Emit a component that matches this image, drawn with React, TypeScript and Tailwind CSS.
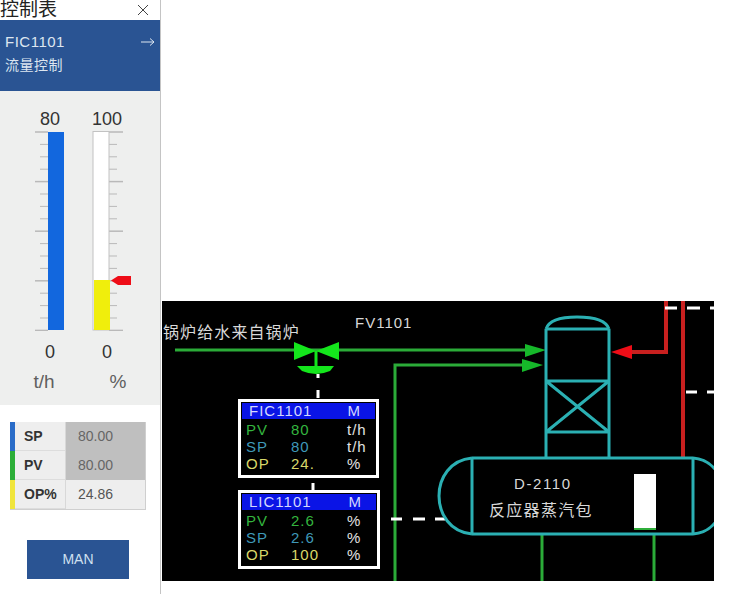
import React from 'react';

const FONT = 'font-["Liberation_Sans","Noto_Sans_CJK_SC",sans-serif]';

const ticks = Array.from({ length: 17 }, (_, i) => ({ y: 132 + i * 12.4, major: i % 4 === 0 }));

// level gauges share one drawing, coordinates follow the panel
const Gauges = () => (
  <svg viewBox="0 131 160 200" className="block w-[160px] h-[200px]">
    {ticks.map((t) => (
      <g key={t.y} stroke="#b9b9b9" strokeWidth={t.major ? 1.5 : 1}>
        <line x1={t.major ? 35 : 40} x2="48" y1={t.y} y2={t.y} />
        <line x1="109" x2={t.major ? 123 : 117} y1={t.y} y2={t.y} />
      </g>
    ))}
    <rect x="48" y="132" width="16" height="198" fill="#1267de" />
    <rect x="93" y="131.5" width="16" height="198.5" fill="#ffffff" stroke="#c2c2c2" />
    <rect x="94" y="280" width="16" height="50" fill="#f0ee0c" />
    <path d="M111 280.5 L118 276 H131 V285 H118 Z" fill="#ee0d17" />
  </svg>
);

const tableRows = [
  { name: 'SP', value: '80.00', strip: 'bg-[#2a6cc8]', cell: 'bg-[#bfbfbf] text-[#666666]' },
  { name: 'PV', value: '80.00', strip: 'bg-[#2cae38]', cell: 'bg-[#bfbfbf] text-[#666666]' },
  { name: 'OP%', value: '24.86', strip: 'bg-[#f0e53c]', cell: 'bg-[#eeeeee] text-[#555555]' },
];

const ControlPanel = () => (
  <aside className="w-[161px] h-[594px] shrink-0 border-r border-[#c4c4c4] flex flex-col">
    <div className="h-[20px] flex items-center justify-between pr-[11px] bg-white">
      <span className="text-[19px] leading-[18px] text-[#222222]">控制表</span>
      <svg viewBox="0 0 12 12" className="w-[12px] h-[12px]" fill="none" stroke="#444444" strokeWidth="1">
        <path d="M1 1 L11 11 M11 1 L1 11" />
      </svg>
    </div>
    <div className="h-[71px] bg-[#2a5493] pl-[5px] pr-[5px] pt-[13px] text-[#dde6f0]">
      <div className="flex items-center justify-between h-[18px]">
        <span className="text-[15px] tracking-[0.5px]">FIC1101</span>
        <svg viewBox="0 0 14 10" className="w-[14px] h-[10px]" fill="none" stroke="#dde6f0" strokeWidth="1">
          <path d="M0 5 H13 M9 1.5 L13 5 L9 8.5" />
        </svg>
      </div>
      <div className="mt-[5px] text-[14px] leading-[18px] tracking-[0.5px]">流量控制</div>
    </div>
    <div className="h-[314px] bg-[#eeefee] pt-[17px]">
      <div className="flex pl-[21px] text-[18px] leading-[22px] text-[#333333]">
        <span className="w-[58px] text-center">80</span>
        <span className="w-[56px] text-center">100</span>
      </div>
      <div className="mt-[1px]">
        <Gauges />
      </div>
      <div className="flex pl-[21px] mt-[10px] text-[18px] leading-[22px] text-[#333333]">
        <span className="w-[58px] text-center">0</span>
        <span className="w-[56px] text-center">0</span>
      </div>
      <div className="flex mt-[8px] text-[19px] leading-[22px] text-[#5f5f5f]">
        <span className="w-[88px] text-center">t/h</span>
        <span className="w-[60px] text-center">%</span>
      </div>
    </div>
    <div className="ml-[10px] mt-[17px] w-[136px] border-b border-r border-[#cfcfcf]">
      {tableRows.map((r) => (
        <div key={r.name} className="flex h-[29px]">
          <div className={`w-[5px] ${r.strip}`} />
          <div className="w-[50px] bg-[#eeeeee] border-b border-[#dddddd] pl-[9px] flex items-center text-[14px] font-bold text-[#333333]">
            {r.name}
          </div>
          <div className={`flex-1 pl-[12px] flex items-center text-[14px] border-l border-[#d8d8d8] ${r.cell}`}>
            {r.value}
          </div>
        </div>
      ))}
    </div>
    <div className="ml-[27px] mt-[30px] w-[102px] h-[39px] bg-[#2a5493] flex items-center justify-center text-[14px] text-[#cfe0f0]">
      MAN
    </div>
  </aside>
);

const Faceplate = ({
  tag,
  rows,
}: {
  tag: string;
  rows: { label: string; value: string; unit: string; color: string }[];
}) => (
  <div className="w-full h-full border-[3px] border-white bg-black pt-[1px] px-px">
    <div className="h-[16px] bg-[#0a14e6] flex items-center justify-between pl-[7px] pr-[14px] text-[15px] tracking-[1px] text-[#d5d8ff]">
      <span>{tag}</span>
      <span>M</span>
    </div>
    <div className="pl-[4px]">
      {rows.map((r) => (
        <div key={r.label} className="grid grid-cols-[45px_48px_1fr] h-[17px] items-center text-[15px] tracking-[1px]">
          <span className={r.color}>{r.label}</span>
          <span className={r.color}>{r.value}</span>
          <span className="text-[#e2e2e2] pl-[8px]">{r.unit}</span>
        </div>
      ))}
    </div>
  </div>
);

const PV = 'text-[#34b53f]';
const SP = 'text-[#3f98b8]';
const OP = 'text-[#d9d86a]';

// process diagram, viewBox uses the screenshot's coordinates
const Diagram = () => (
  <svg viewBox="162 301 552 280" className="absolute inset-0 w-full h-full">
    <g stroke="#2bab38" strokeWidth="3" fill="none">
      <path d="M175 350 H525" />
      <path d="M395 581 V365 H522" />
      <path d="M542 534 V581" />
      <path d="M654 534 V581" />
    </g>
    <path d="M294 342 L316 351 L294 360 Z M339 342 L316 351 L339 360 Z" fill="#14e61c" />
    <path d="M316 351 V367" stroke="#14e61c" strokeWidth="3" />
    <path d="M297 366 H334 L330 371 Q316 377 302 371 Z" fill="#14e61c" />
    <path d="M525 344 L546 350 L525 357 Z" fill="#16b82a" />
    <path d="M522 359 L543 365 L522 372 Z" fill="#16b82a" />

    <g stroke="#c8201f" strokeWidth="4" fill="none">
      <path d="M625 352 H666 V301" />
      <path d="M683 301 V458" />
    </g>
    <path d="M611 352 L632 345 V359 Z" fill="#ee0d17" />

    <g stroke="#ffffff" strokeWidth="3" fill="none">
      <path d="M318 374 V378 M318 390 V398" />
      <path d="M313 483 V490" />
      <path d="M665 308 H677 M687 308 H700 M710 308 H714" />
      <path d="M686 392 H697 M707 392 H714" />
      <path d="M391 519 H402 M413 519 H425 M435 519 H445" />
    </g>

    <g stroke="#2bb0b3" strokeWidth="3" fill="none">
      <path d="M546 329 H609 M546 329 Q550 317 577 317 Q605 317 609 329" />
      <path d="M546 329 V458 M609 329 V458" />
      <path d="M546 381 H609 M546 432 H609 M546 381 L609 432 M609 381 L546 432" />
      <path d="M472 458 H693 M472 534 H693" />
      <path d="M472 458 V534 M693 458 V534" />
      <path d="M472 458 C450 460 439 478 439 496 C439 514 450 532 472 534" />
      <path d="M693 458 C708 459 716 468 722 480 M693 534 C708 533 716 524 722 512" />
    </g>
    <rect x="634" y="474" width="22" height="56" fill="#ffffff" />
    <rect x="634" y="528" width="22" height="2" fill="#2fae3a" />
  </svg>
);

const App = () => (
  <div className={`w-[730px] h-[594px] bg-white flex overflow-hidden ${FONT}`}>
    <ControlPanel />
    <main className="pt-[301px] pl-px">
      <div className="relative w-[552px] h-[280px] bg-black overflow-hidden">
        <Diagram />
        <span className="absolute left-px top-[23px] text-[16px] leading-[18px] tracking-[1.1px] text-[#d8d8d8] whitespace-nowrap">
          锅炉给水来自锅炉
        </span>
        <span className="absolute left-[193px] top-[14px] text-[15px] leading-[16px] tracking-[1px] text-[#d8d8d8]">
          FV1101
        </span>
        <span className="absolute left-[352px] top-[175px] text-[15px] leading-[16px] tracking-[1.6px] text-[#d8d8d8]">
          D-2110
        </span>
        <span className="absolute left-[327px] top-[201px] text-[16px] leading-[18px] tracking-[1.3px] text-[#d8d8d8] whitespace-nowrap">
          反应器蒸汽包
        </span>
        <div className="absolute left-[76px] top-[98px] w-[141px] h-[79px]">
          <Faceplate
            tag="FIC1101"
            rows={[
              { label: 'PV', value: '80', unit: 't/h', color: PV },
              { label: 'SP', value: '80', unit: 't/h', color: SP },
              { label: 'OP', value: '24.', unit: '%', color: OP },
            ]}
          />
        </div>
        <div className="absolute left-[76px] top-[189px] w-[142px] h-[79px]">
          <Faceplate
            tag="LIC1101"
            rows={[
              { label: 'PV', value: '2.6', unit: '%', color: PV },
              { label: 'SP', value: '2.6', unit: '%', color: SP },
              { label: 'OP', value: '100', unit: '%', color: OP },
            ]}
          />
        </div>
      </div>
    </main>
  </div>
);

export default App;
